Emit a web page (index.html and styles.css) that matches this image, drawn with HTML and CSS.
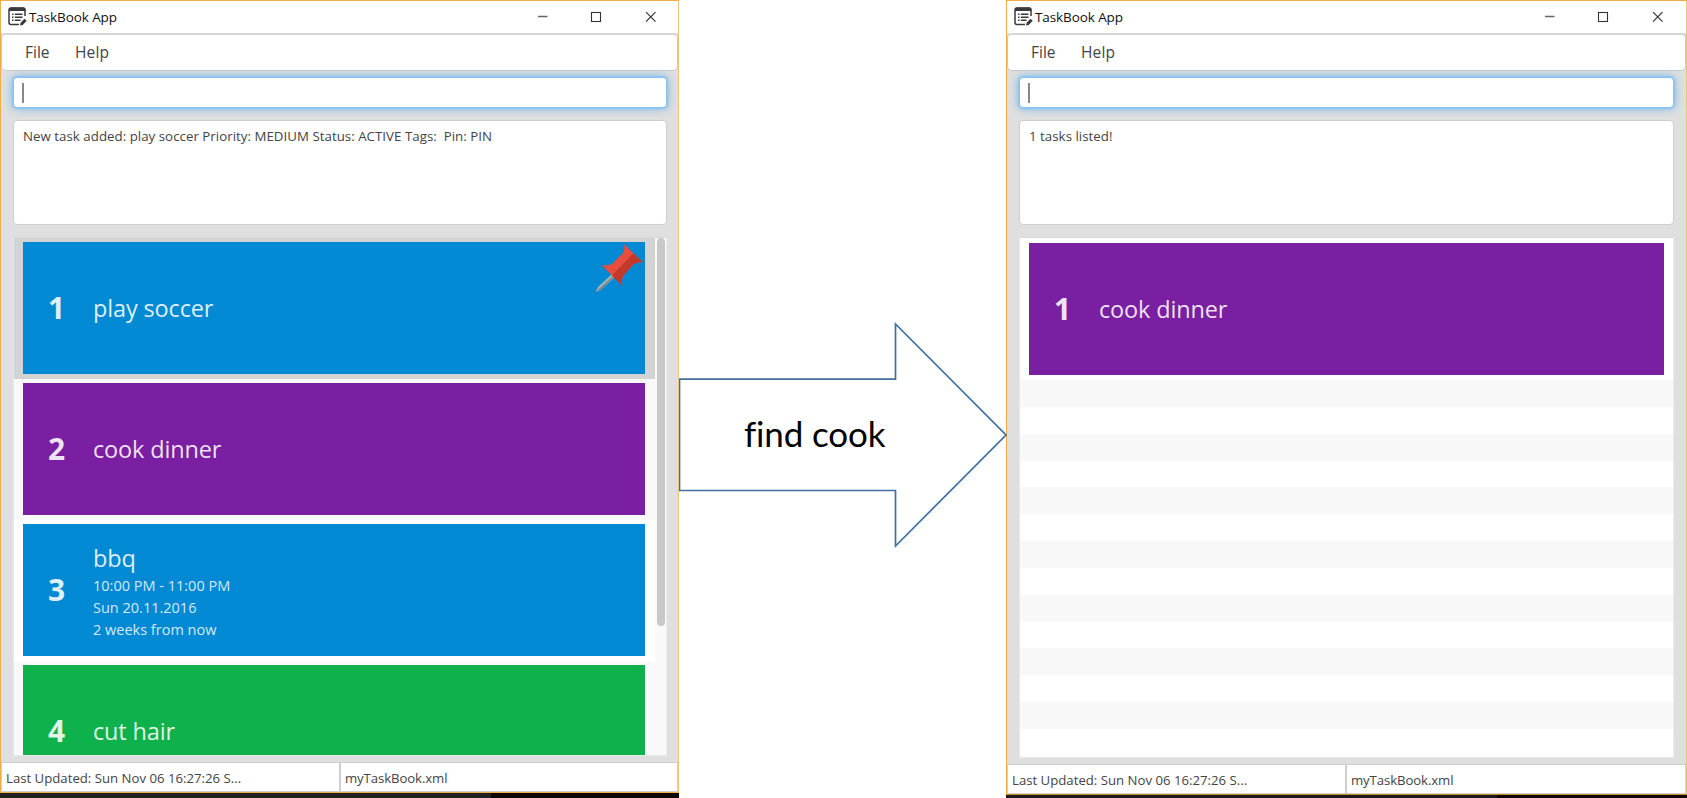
FILE: index.html
```html
<!DOCTYPE html>
<html lang="en">
<head>
<meta charset="utf-8">
<title>TaskBook App</title>
<link rel="stylesheet" href="styles.css">
</head>
<body>
<svg class="defs" aria-hidden="true">
  <symbol id="book" viewBox="0 0 20 20">
    <path d="M17 9V3.2Q17 1 15 1H3Q1 1 1 3V15.5Q1 17.500 3 17.500H11" fill="none" stroke="#3a3a3c" stroke-width="1.5"/>
    <path d="M1 2.500Q1 .5 3 .5H15.500Q17.500 .5 17.500 2.500V4H1Z" fill="#3a3a3c"/>
    <path d="M4 7.200H5.500M4 10.200H5.500M4 13.200H5.500M6.800 7.200H14.500M6.800 10.200H14.500M6.800 13.200H12.500" stroke="#3a3a3c" stroke-width="1.500"/>
    <path d="M12 18.500L12.600 15.700L16.500 11.700L18.700 13.800L14.800 17.900Z" fill="#3a3a3c"/>
  </symbol>
  <symbol id="controls" viewBox="0 0 120 14">
    <path d="M1 6.500H10.500" stroke="#666" stroke-width="1.500" fill="none"/>
    <rect x="54.500" y="2.500" width="9" height="9" fill="none" stroke="#333" stroke-width="1.100"/>
    <path d="M109 2.200L118.500 11.700M118.500 2.200L109 11.700" stroke="#333" stroke-width="1.200"/>
  </symbol>
</svg>
<main class="board">
  <section class="side side-left">
    <div class="window">
      <header class="titlebar"><svg class="logo"><use href="#book"/></svg><span class="app-name">TaskBook App</span><svg class="controls"><use href="#controls"/></svg></header>
      <nav class="menu"><span class="file">File</span><span class="help">Help</span></nav>
      <div class="content">
        <div class="command"><i class="caret"></i></div>
        <div class="result">New task added: play soccer Priority: MEDIUM Status: ACTIVE Tags:&nbsp; Pin: PIN</div>
        <div class="list">
          <div class="cells">
            <div class="cell selected"><article class="card blue"><b class="num">1</b><div class="info"><h2>play soccer</h2></div>
              <svg class="pin" viewBox="0 0 50 50"><path d="M18 30L4 43L1.500 48L6 46.500L21 33Z" fill="#a3b3b5"/><path d="M21 32L6.500 46L1.500 48L19 32Z" fill="#7d8787"/><path d="M30 0L49 18.500Q42 17.500 38 22L29 32Q27 36 28.500 42L7.500 21Q14 22 18 20L29 9Q31 5 30 0Z" fill="#e84c3d"/><path d="M39.500 9.200L49 18.500Q42 17.500 38 22L29 32Q27 36 28.500 42L18 31.500Z" fill="#c1392b"/></svg>
            </article></div>
            <div class="cell odd"><article class="card purple"><b class="num">2</b><div class="info"><h2>cook dinner</h2></div></article></div>
            <div class="cell"><article class="card blue"><b class="num">3</b><div class="info detailed"><h2>bbq</h2><p>10:00 PM - 11:00 PM</p><p>Sun 20.11.2016</p><p>2 weeks from now</p></div></article></div>
            <div class="cell odd"><article class="card green"><b class="num">4</b><div class="info"><h2>cut hair</h2></div></article></div>
          </div>
          <div class="scrollbar"><div class="thumb"></div></div>
        </div>
      </div>
      <footer class="status"><span class="updated">Last Updated: Sun Nov 06 16:27:26 S...</span><span class="path">myTaskBook.xml</span></footer>
    </div>
    <div class="desktop"></div>
  </section>
  <div class="step">
    <svg class="arrow" viewBox="0 0 328 228"><path d="M.5 58.200H216.500V3L327 114L216.500 225V169.500H.5Z" fill="#fff" stroke="#3f709f" stroke-width="1.700"/></svg>
    <span class="step-label">find cook</span>
  </div>
  <section class="side side-right">
    <div class="window">
      <header class="titlebar"><svg class="logo"><use href="#book"/></svg><span class="app-name">TaskBook App</span><svg class="controls"><use href="#controls"/></svg></header>
      <nav class="menu"><span class="file">File</span><span class="help">Help</span></nav>
      <div class="content">
        <div class="command"><i class="caret"></i></div>
        <div class="result">1 tasks listed!</div>
        <div class="list">
          <div class="cells">
            <div class="cell"><article class="card purple"><b class="num">1</b><div class="info"><h2>cook dinner</h2></div></article></div>
            <div class="empty-rows"></div>
          </div>
        </div>
      </div>
      <footer class="status"><span class="updated">Last Updated: Sun Nov 06 16:27:26 S...</span><span class="path">myTaskBook.xml</span></footer>
    </div>
    <div class="desktop"></div>
  </section>
</main>
</body>
</html>
```

FILE: styles.css
```css
* { box-sizing: border-box; }
body { margin: 0; background: #fff; font-family: "Open Sans", "Noto Sans", sans-serif; color: #444; overflow: hidden; }
.defs { display: none; }
.board { display: flex; width: 1687px; height: 798px; }
.side { display: flex; flex-direction: column; flex: none; height: 798px; }
.side-left { width: 679px; }
.side-right { width: 681px; }
.window { display: flex; flex-direction: column; height: 793px; border: 1px solid #efae48; border-right-color: #e9c27c; background: #dfdfdf; }
.side-right .window { height: 795px; border-bottom-color: #c98a28; }
.desktop { flex: 1; background: linear-gradient(90deg, #222 0 491px, #0e0703 491px); }
.side-right .desktop { background: linear-gradient(90deg, #1c1a1e 0 491px, #0e0703 491px); }
.titlebar { display: flex; align-items: center; height: 32px; flex: none; background: #fff; padding-left: 7px; }
.logo { width: 20px; height: 20px; flex: none; }
.app-name { margin-left: 1px; font-size: 13.5px; letter-spacing: -.1px; color: #111; line-height: 30px; }
.controls { width: 120px; height: 14px; margin-left: auto; margin-right: 21px; }
.side-right .controls { margin-right: 22px; }
.menu { display: flex; align-items: center; height: 38px; flex: none; background: #fff; border: 1px solid #c9c9c9; border-top: 2px solid #d6d6d6; border-radius: 5px; padding: 0 0 1px 23px; font-size: 15.5px; line-height: 34px; }
.file { width: 50px; }
.help { letter-spacing: .15px; }
.content { display: flex; flex-direction: column; flex: 1; min-height: 0; padding: 6px 11px 6px 12px; }
.side-right .content { padding-right: 12px; }
.command { height: 31px; flex: none; display: flex; align-items: center; background: #fff; border: 1px solid #86c1ef; border-radius: 4px; padding-left: 8px; box-shadow: 0 0 1px 1px #92c6ef, 0 0 8px 1px #7bb9e9; }
.caret { width: 2px; height: 20px; background: #888; }
.result { height: 105px; flex: none; margin-top: 12px; background: #fff; border: 1px solid #cecece; border-radius: 4px; padding: 6px 9px; font-size: 13.3px; letter-spacing: .02px; line-height: 19px; white-space: pre; }
.list { display: flex; flex: 1; min-height: 0; margin-top: 12px; border: 1px solid #e9e9e9; border-top-color: #d7d7d7; border-right-color: #ececec; background: #f9f9f9; overflow: hidden; }
.side-right .cells { padding-top: 1px; background: #fff; }
.cells { flex: 1; min-width: 0; }
.cell { height: 141px; padding: 4px 9px 5px; background: #fff; }
.side-left .cell { padding-right: 10px; }
.cell.odd { background: #f9f9f9; }
.cell.selected { background: #d3d3d3; }
.card { display: flex; align-items: center; position: relative; height: 132px; color: rgba(255,255,255,.88); }
.blue { background: #0289d3; }
.purple { background: #7b1fa2; }
.green { background: #0eb14b; }
.num { width: 70px; padding-left: 25px; font-size: 30px; line-height: 40px; flex: none; }
.info h2 { margin: 0; font-size: 23.5px; letter-spacing: -.15px; line-height: 34px; font-weight: 400; }
.info.detailed { padding-top: 2px; }
.info p { margin: 0; font-size: 14.5px; line-height: 22.3px; color: rgba(255,255,255,.84); }
.pin { position: absolute; width: 50px; height: 50px; right: 1px; top: 2px; }
.scrollbar { width: 11px; padding: 0 1px 0 2px; flex: none; background: #f9f9f9; }
.thumb { width: 8px; height: 388px; border-radius: 4px; background: #c8c8c8; }
.empty-rows { height: 378px; background: repeating-linear-gradient(180deg, #f8f8f8 0 26.85px, #fff 26.85px 53.7px); }
.status { display: flex; height: 30px; flex: none; background: #fff; border: 1px solid #cfcfcf; padding-top: 1px; font-size: 13.2px; line-height: 28px; white-space: nowrap; }
.updated { width: 339px; margin-top: -1px; padding: 1px 0 0 4px; border-right: 2px solid #cfcfcf; }
.path { padding-left: 4px; letter-spacing: -.1px; }
.step { display: flex; align-items: center; justify-content: center; position: relative; width: 327px; flex: none; }
.arrow { position: absolute; left: 0; top: 320.5px; width: 328px; height: 228px; }
.step-label { position: absolute; left: 65px; top: 409px; font: 35px/48px Lato, sans-serif; font-variant-ligatures: none; letter-spacing: -.15px; color: #000; white-space: nowrap; }
```
